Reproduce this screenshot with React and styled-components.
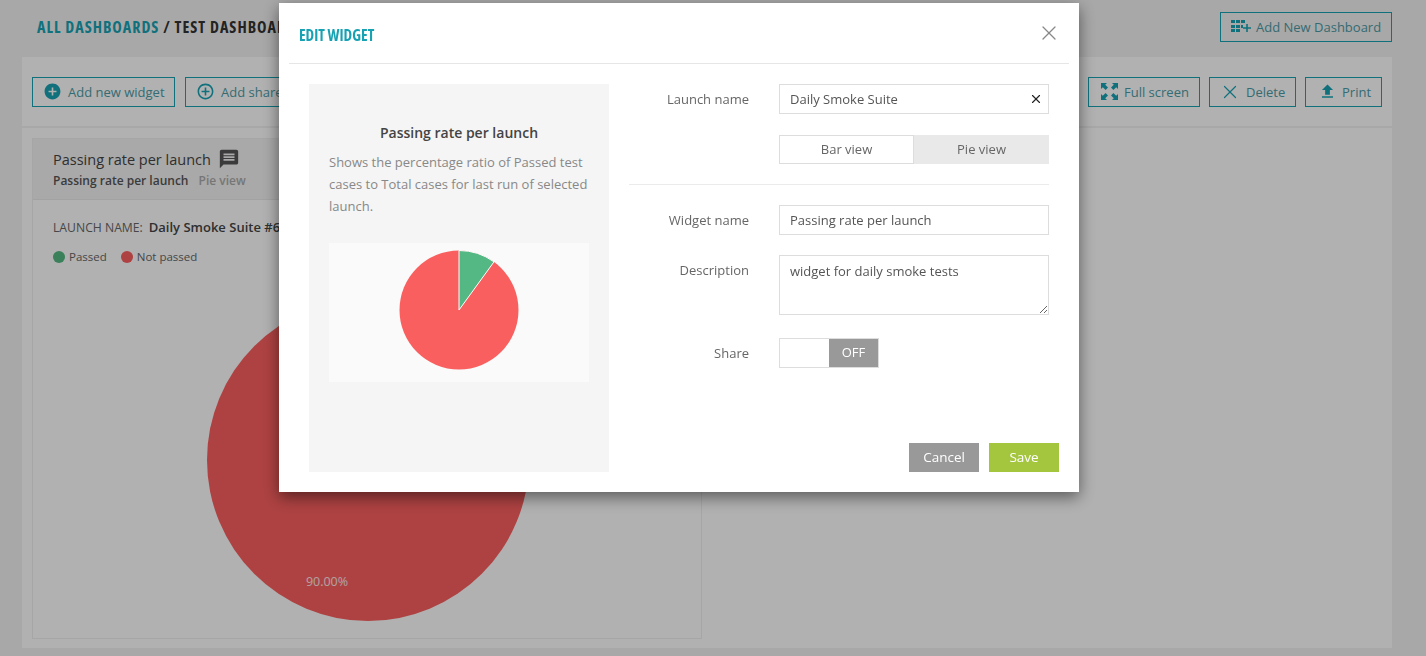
import React from 'react';
import styled, { createGlobalStyle } from 'styled-components';
import { X } from 'lucide-react';
import { MdAddCircle, MdAddCircleOutline, MdMessage, MdFileUpload } from 'react-icons/md';

const teal = '#17a2b3';

const GlobalStyle = createGlobalStyle`
  html, body { margin: 0; padding: 0; height: 100%; overflow: hidden; }
  body { font-family: "Open Sans", "Liberation Sans", sans-serif; background: #f1f1f1; color: #444; }
  * { box-sizing: border-box; }
`;

const Page = styled.div`
  width: 1426px;
  height: 656px;
  padding: 12px 34px 8px 22px;
  overflow: hidden;
`;

const TopBar = styled.header`
  display: flex;
  align-items: center;
  justify-content: space-between;
  height: 30px;
  margin-bottom: 15px;
  padding-left: 15px;
`;

const Crumbs = styled.h1`
  margin: 0;
  font-size: 16px;
  font-weight: 700;
  font-stretch: 75%;
  letter-spacing: 1px;
  text-transform: uppercase;
  color: #333;
`;

const CrumbLink = styled.span`
  color: ${teal};
`;

const OutlineButton = styled.div`
  display: flex;
  align-items: center;
  gap: ${(p) => p.$gap || 6}px;
  height: 30px;
  width: ${(p) => p.$width}px;
  padding-left: ${(p) => p.$pad || 0}px;
  border: 1px solid ${teal};
  font-size: 13px;
  color: #4d9aa5;
  white-space: nowrap;
  svg { color: ${teal}; flex: none; }
`;

const Panel = styled.main`
  height: 591px;
  background: #fefefe;
`;

const Toolbar = styled.div`
  display: flex;
  align-items: center;
  justify-content: space-between;
  height: 71px;
  padding: 0 10px;
  border-bottom: 2px solid #f1f1f1;
`;

const ButtonGroup = styled.div`
  display: flex;
  gap: ${(p) => p.$gap}px;
`;

const WidgetCard = styled.section`
  width: 670px;
  height: 501px;
  margin: 10px 0 0 10px;
  border: 1px solid #eee;
  overflow: hidden;
`;

const WidgetHead = styled.div`
  height: 61px;
  padding: 10px 20px 0;
  background: #f2f2f2;
  border-bottom: 1px solid #e8e8e8;
`;

const WidgetTitle = styled.div`
  display: flex;
  align-items: center;
  gap: 7px;
  height: 20px;
  font-size: 14.5px;
  color: #444;
  svg { color: #555; }
`;

const WidgetMeta = styled.div`
  display: flex;
  gap: 10px;
  margin-top: 3px;
  font-size: 12px;
  font-weight: 600;
  line-height: 18px;
  color: #555;
`;

const MetaMuted = styled.span`
  color: #aaa;
`;

const LaunchLine = styled.div`
  display: flex;
  align-items: baseline;
  gap: 6px;
  margin: 18px 0 0 20px;
  font-size: 12.2px;
  line-height: 18px;
  color: #666;
`;

const LaunchValue = styled.span`
  font-size: 13px;
  font-weight: 600;
  color: #444;
`;

const Legend = styled.div`
  display: flex;
  gap: 14px;
  margin: 11px 0 0 20px;
  font-size: 11.5px;
  line-height: 18px;
  color: #666;
`;

const LegendItem = styled.span`
  display: flex;
  align-items: center;
  gap: 4px;
`;

const Dot = styled.i`
  width: 12px;
  height: 12px;
  border-radius: 50%;
  background: ${(p) => p.$color};
`;

const BigPie = styled.svg`
  display: block;
  margin: 32px 0 0 173px;
`;

const PieLabel = styled.text`
  font-family: "Open Sans", sans-serif;
  font-size: 12.5px;
  fill: #fff;
  opacity: 0.85;
`;

const Overlay = styled.div`
  position: fixed;
  inset: 0;
  background: rgba(0, 0, 0, 0.3);
`;

const Modal = styled.div`
  position: absolute;
  left: 279px;
  top: 3px;
  width: 800px;
  height: 489px;
  padding: 0 10px;
  background: #fff;
  box-shadow: 0 5px 15px rgba(0, 0, 0, 0.5);
`;

const ModalHead = styled.div`
  display: flex;
  align-items: center;
  justify-content: space-between;
  height: 61px;
  padding: 0 8px 0 10px;
  border-bottom: 1px solid #e6e6e6;
  svg { color: #888; }
`;

const ModalTitle = styled.h2`
  margin: 5px 0 0;
  font-size: 15.4px;
  font-weight: 700;
  font-stretch: 75%;
  text-transform: uppercase;
  color: ${teal};
`;

const ModalBody = styled.div`
  display: flex;
  padding: 20px 0 0 20px;
`;

const Preview = styled.div`
  width: 300px;
  height: 388px;
  padding: 39px 20px 0;
  background: #f5f5f5;
`;

const PreviewTitle = styled.div`
  font-size: 14px;
  font-weight: 600;
  line-height: 20px;
  text-align: center;
  color: #444;
`;

const PreviewText = styled.p`
  margin: 8px 0 0;
  font-size: 13px;
  line-height: 22px;
  color: #888;
`;

const ChartBox = styled.div`
  display: flex;
  align-items: center;
  justify-content: center;
  height: 139px;
  margin-top: 26px;
  padding-bottom: 5px;
  background: #fafafa;
`;

const FormSide = styled.div`
  display: flex;
  flex-direction: column;
  width: 440px;
  height: 388px;
  padding-left: 20px;
`;

const Row = styled.div`
  display: flex;
  align-items: ${(p) => (p.$top ? 'flex-start' : 'center')};
  margin-top: ${(p) => p.$mt || 0}px;
`;

const Label = styled.label`
  flex: none;
  width: 120px;
  margin-right: 30px;
  padding-top: ${(p) => (p.$top ? 6 : 0)}px;
  font-size: 13px;
  line-height: 18px;
  text-align: right;
  color: #666;
`;

const FieldWrap = styled.div`
  position: relative;
  width: 270px;
`;

const TextField = styled.input`
  display: block;
  width: 270px;
  height: 30px;
  padding: 0 10px;
  border: 1px solid #ddd;
  outline: none;
  background: #fff;
  font: 13px "Open Sans", sans-serif;
  color: #555;
`;

const ClearIcon = styled(X)`
  position: absolute;
  right: 6px;
  top: 8px;
  color: #222;
`;

const Segment = styled.div`
  display: flex;
  width: 270px;
  height: 29px;
`;

const SegmentItem = styled.div`
  display: flex;
  align-items: center;
  justify-content: center;
  width: 135px;
  padding-bottom: 1px;
  font-size: 13px;
  color: #666;
  background: ${(p) => (p.$active ? '#fff' : '#e9e9e9')};
  border: ${(p) => (p.$active ? '1px solid #ddd' : '0')};
`;

const Divider = styled.hr`
  width: 420px;
  height: 1px;
  margin: 20px 0;
  border: 0;
  background: #ebebeb;
`;

const NoteField = styled.textarea`
  display: block;
  width: 270px;
  height: 60px;
  padding: 6px 10px;
  border: 1px solid #ddd;
  outline: none;
  font: 13px/18px "Open Sans", sans-serif;
  color: #555;
`;

const Switch = styled.div`
  display: flex;
  justify-content: flex-end;
  width: 100px;
  height: 30px;
  border: 1px solid #ddd;
  background: #fff;
`;

const SwitchKnob = styled.span`
  display: flex;
  align-items: center;
  justify-content: center;
  width: 49px;
  padding-bottom: 2px;
  background: #999;
  font-size: 13px;
  color: #fff;
`;

const Actions = styled.div`
  display: flex;
  justify-content: flex-end;
  gap: 10px;
  margin-top: auto;
  margin-right: -10px;
`;

const ActionButton = styled.div`
  display: flex;
  align-items: center;
  justify-content: center;
  width: 70px;
  height: 29px;
  padding-bottom: 1px;
  background: ${(p) => p.$bg};
  font-size: 13.5px;
  color: #fff;
`;

const polar = (cx, cy, r, deg) => {
  const a = (deg - 90) * (Math.PI / 180);
  return [cx + r * Math.cos(a), cy + r * Math.sin(a)];
};

const Pie = ({ size, r, ...rest }) => {
  const c = size / 2;
  const [x, y] = polar(c, c, r, 36);
  return (
    <svg width={size} height={size} viewBox={`0 0 ${size} ${size}`} {...rest}>
      <circle cx={c} cy={c} r={r} fill="#f95f5f" />
      <path d={`M${c} ${c}L${c} ${c - r}A${r} ${r} 0 0 1 ${x} ${y}Z`} fill="#53b883" stroke="#fff" strokeWidth="1" />
    </svg>
  );
};

const GridPlus = () => (
  <svg width="20" height="16" viewBox="0 0 20 16" fill="currentColor">
    <rect x="0" y="1" width="4" height="3" /><rect x="5" y="1" width="4" height="3" /><rect x="10" y="1" width="4" height="3" />
    <rect x="0" y="6" width="4" height="3" /><rect x="5" y="6" width="4" height="3" /><rect x="10" y="6" width="2" height="3" />
    <rect x="0" y="10" width="4" height="3" /><rect x="5" y="10" width="4" height="3" />
    <path d="M15.2 5h1.6v3.2H20v1.6h-3.2V13h-1.6V9.8H12V8.2h3.2z" />
  </svg>
);

const Expand = () => (
  <svg width="17" height="17" viewBox="0 0 17 17" fill="currentColor">
    <path d="M0 0h6L4.2 1.8 7 4.6 4.6 7 1.8 4.2 0 6z" />
    <path d="M17 0v6l-1.8-1.8L12.4 7 10 4.6l2.8-2.8L11 0z" />
    <path d="M0 17v-6l1.8 1.8L4.6 10 7 12.4l-2.8 2.8L6 17z" />
    <path d="M17 17h-6l1.8-1.8L10 12.4l2.4-2.4 2.8 2.8L17 11z" />
  </svg>
);

export default function App() {
  return (
    <>
      <GlobalStyle />
      <Page>
        <TopBar>
          <Crumbs>
            <CrumbLink>All Dashboards</CrumbLink> / Test Dashboard
          </Crumbs>
          <OutlineButton $width={172} $pad={10} $gap={5}>
            <GridPlus />
            Add New Dashboard
          </OutlineButton>
        </TopBar>
        <Panel>
          <Toolbar>
            <ButtonGroup $gap={10}>
              <OutlineButton $width={143} $pad={10}>
                <MdAddCircle size={19} />
                Add new widget
              </OutlineButton>
              <OutlineButton $width={170} $pad={10}>
                <MdAddCircleOutline size={19} />
                Add shared widget
              </OutlineButton>
            </ButtonGroup>
            <ButtonGroup $gap={9}>
              <OutlineButton $width={112} $pad={12}>
                <Expand />
                Full screen
              </OutlineButton>
              <OutlineButton $width={87} $pad={9} $gap={5}>
                <X size={22} strokeWidth={1.3} />
                Delete
              </OutlineButton>
              <OutlineButton $width={77} $pad={12} $gap={5}>
                <MdFileUpload size={19} />
                Print
              </OutlineButton>
            </ButtonGroup>
          </Toolbar>
          <WidgetCard>
            <WidgetHead>
              <WidgetTitle>
                Passing rate per launch
                <MdMessage size={22} />
              </WidgetTitle>
              <WidgetMeta>
                Passing rate per launch
                <MetaMuted>Pie view</MetaMuted>
              </WidgetMeta>
            </WidgetHead>
            <LaunchLine>
              LAUNCH NAME:
              <LaunchValue>Daily Smoke Suite #6</LaunchValue>
            </LaunchLine>
            <Legend>
              <LegendItem><Dot $color="#53b883" />Passed</LegendItem>
              <LegendItem><Dot $color="#f95f5f" />Not passed</LegendItem>
            </Legend>
            <BigPie width={324} height={324} viewBox="0 0 324 324">
              <circle cx="162" cy="162" r="161" fill="#f95f5f" />
              <PieLabel x="121" y="288" textAnchor="middle">90.00%</PieLabel>
            </BigPie>
          </WidgetCard>
        </Panel>
      </Page>
      <Overlay>
        <Modal>
          <ModalHead>
            <ModalTitle>Edit widget</ModalTitle>
            <X size={24} strokeWidth={1.3} />
          </ModalHead>
          <ModalBody>
            <Preview>
              <PreviewTitle>Passing rate per launch</PreviewTitle>
              <PreviewText>
                Shows the percentage ratio of Passed test cases to Total cases for last run of selected launch.
              </PreviewText>
              <ChartBox>
                <Pie size={120} r={59.5} />
              </ChartBox>
            </Preview>
            <FormSide>
              <Row $top>
                <Label $top>Launch name</Label>
                <FieldWrap>
                  <TextField readOnly value="Daily Smoke Suite" />
                  <ClearIcon size={14} strokeWidth={2} />
                </FieldWrap>
              </Row>
              <Row $mt={21}>
                <Label />
                <Segment>
                  <SegmentItem $active>Bar view</SegmentItem>
                  <SegmentItem>Pie view</SegmentItem>
                </Segment>
              </Row>
              <Divider />
              <Row>
                <Label>Widget name</Label>
                <TextField readOnly value="Passing rate per launch" />
              </Row>
              <Row $top $mt={20}>
                <Label $top>Description</Label>
                <NoteField readOnly value="widget for daily smoke tests" />
              </Row>
              <Row $mt={23}>
                <Label>Share</Label>
                <Switch><SwitchKnob>OFF</SwitchKnob></Switch>
              </Row>
              <Actions>
                <ActionButton $bg="#999">Cancel</ActionButton>
                <ActionButton $bg="#a4c63f">Save</ActionButton>
              </Actions>
            </FormSide>
          </ModalBody>
        </Modal>
      </Overlay>
    </>
  );
}
